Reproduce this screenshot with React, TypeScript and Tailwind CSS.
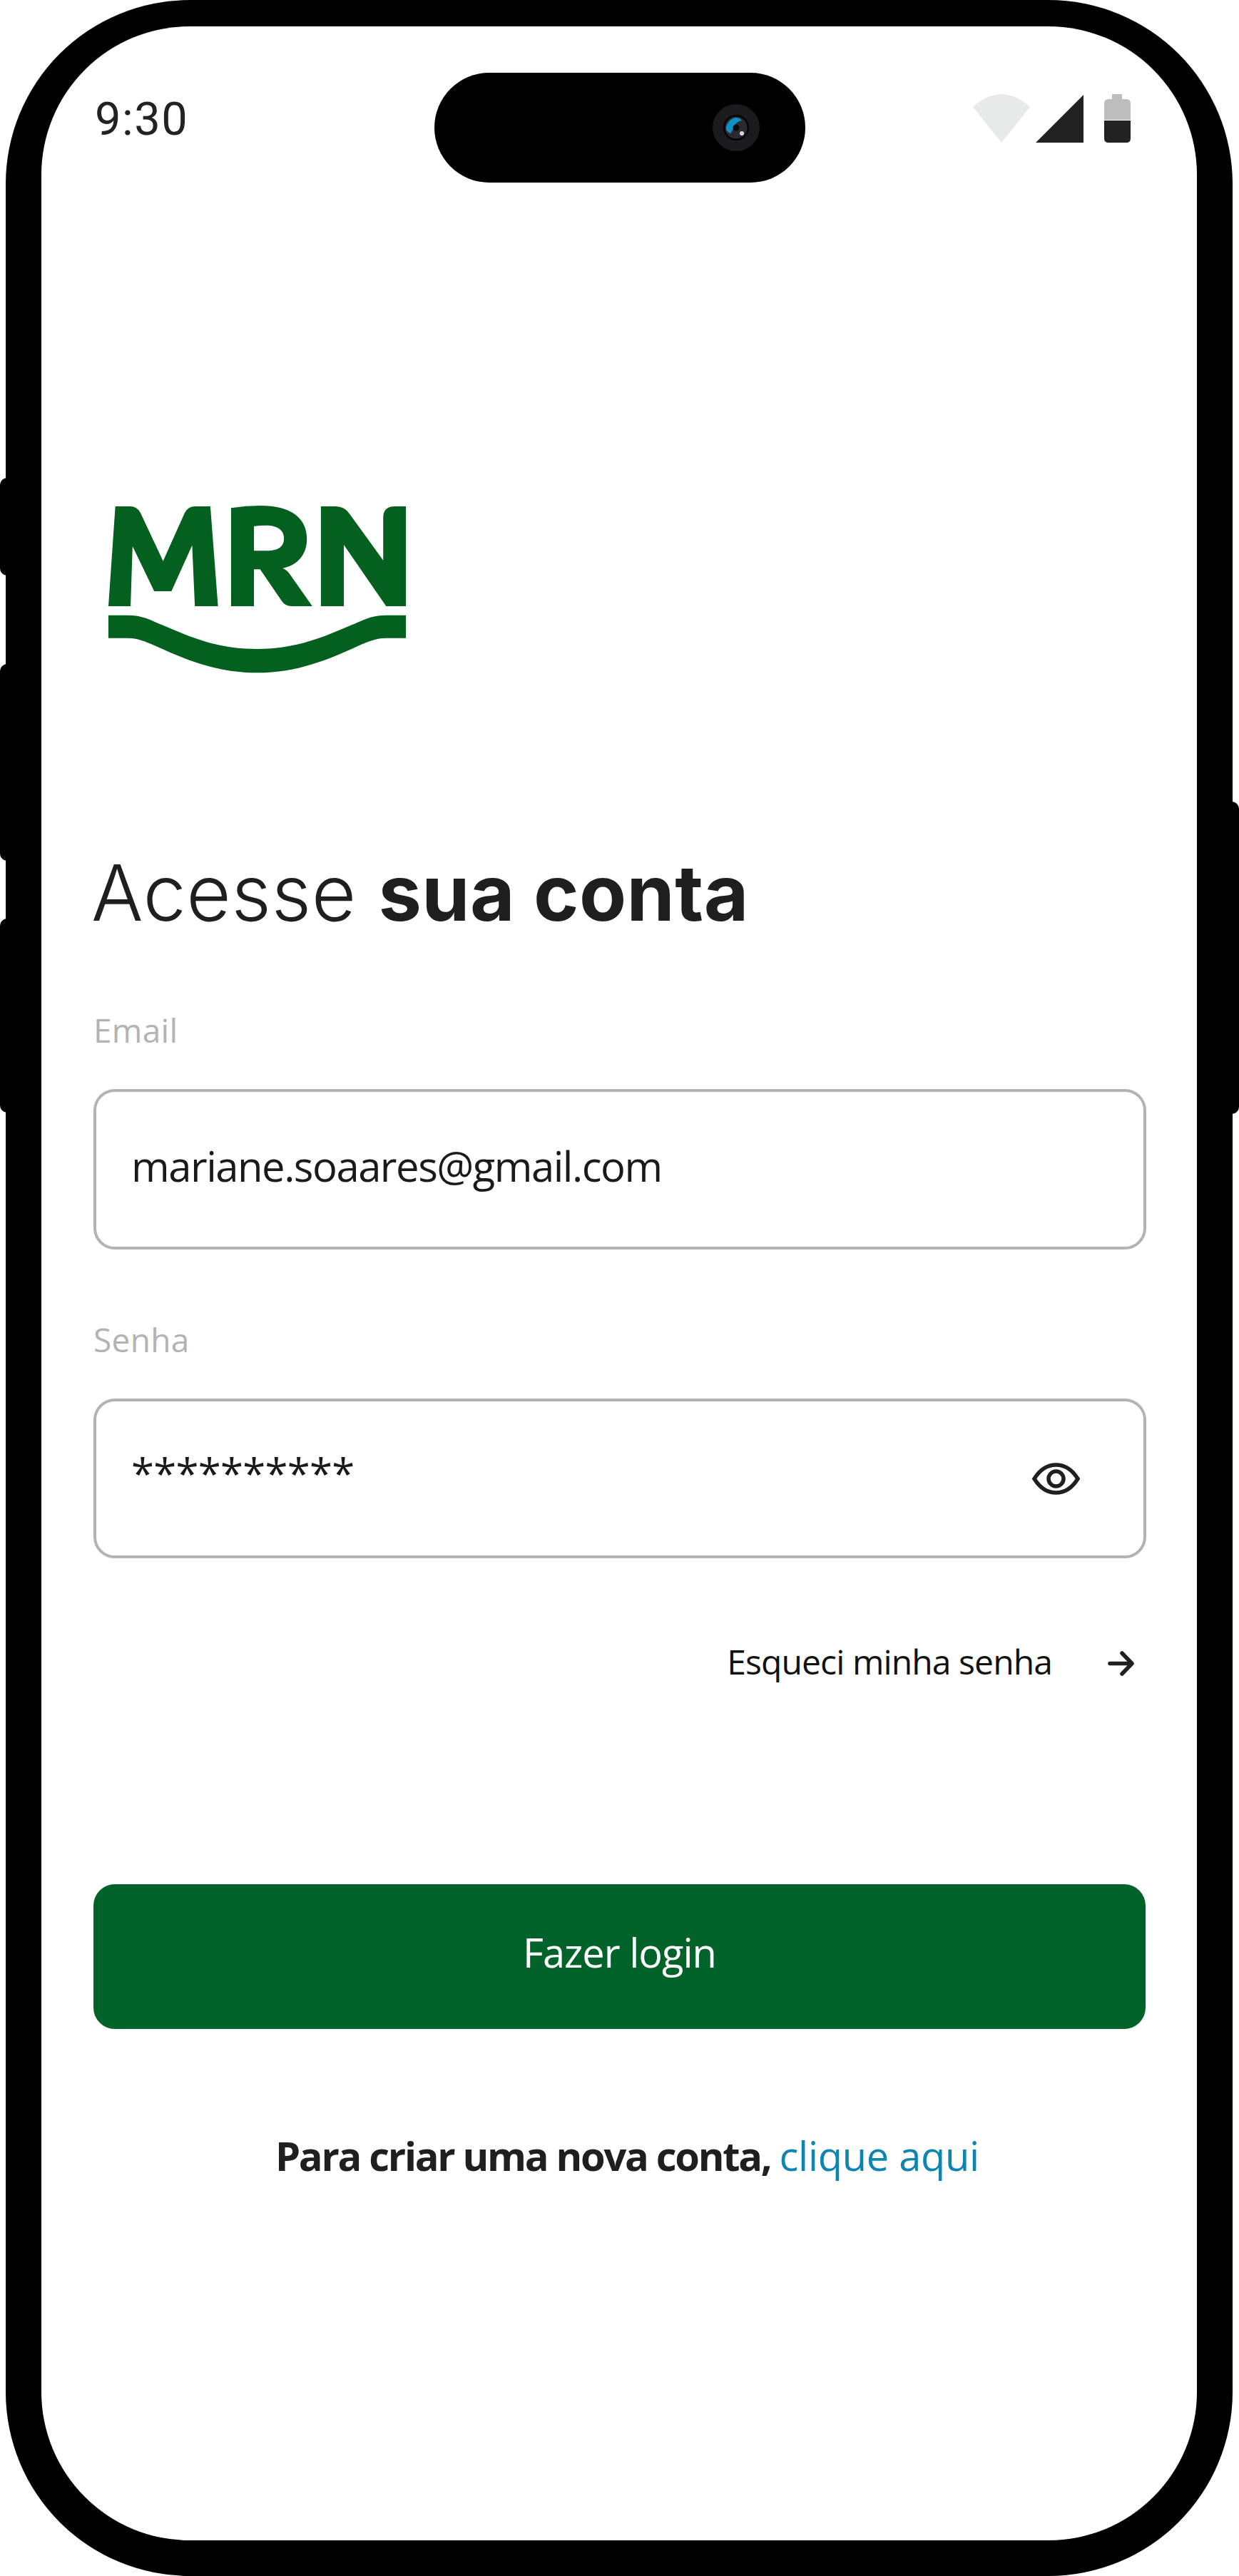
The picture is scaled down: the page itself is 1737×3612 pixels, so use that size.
function Camera() {
  return (
    <svg width="66" height="66" viewBox="0 0 66 66">
      <circle cx="33" cy="33" r="33" fill="#1b1b1d" />
      <circle cx="33" cy="33" r="18" fill="#050505" />
      <circle cx="33" cy="33" r="15.5" fill="#2b2b2f" />
      <path d="M18.7 34C20 26 26 19 33 19Q38 19 41 23Q35 24 32 28L29 35L25 41Q19 38 18.7 34Z" fill="#0f8fc2" />
      <circle cx="33" cy="33" r="4.5" fill="#0a0a0a" />
      <circle cx="41" cy="41" r="3" fill="#d8d8d8" />
    </svg>
  )
}

function StatusIcons() {
  return (
    <div className="flex items-center">
      <svg width="80" height="68" viewBox="0 0 80 68">
        <path d="M40 68L0 18Q40 -18 80 18Z" fill="#e8eaea" />
      </svg>
      <svg className="ml-2" width="67" height="68" viewBox="0 0 67 68">
        <path d="M67 1V68H0Z" fill="#222222" />
      </svg>
      <svg className="ml-[29px]" width="37" height="68" viewBox="0 0 37 68">
        <path d="M11 0H25V7H31Q37 7 37 13V36H0V13Q0 7 6 7H11Z" fill="#bdbdbd" />
        <path d="M0 37H37V62Q37 68 31 68H6Q0 68 0 62Z" fill="#222222" />
      </svg>
    </div>
  )
}

function Logo() {
  return (
    <svg
      className="ml-[21px] block"
      width="417"
      height="235"
      viewBox="152 145 1208 705"
      preserveAspectRatio="none"
      fill="#03601f"
    >
      <path d="M180 148L240 148Q268 148 282 175L374 378L462 175Q475 148 505 148L566 148L597 568L503 568L492 312L408 505L338 505L250 316L242 568L152 568Z" />
      <path
        fillRule="evenodd"
        d="M650 155Q710 145 770 145C890 145 958 195 958 285C958 355 915 398 860 408Q880 418 890 435L980 568L895 568Q870 568 855 545L768 413L743 413L743 568L650 568ZM743 232L743 335L790 335C840 335 865 320 865 282C865 245 835 228 790 228Q765 228 743 232Z"
      />
      <path d="M1015 148L1075 148Q1110 148 1130 178L1268 375L1268 195Q1268 148 1315 148L1360 148L1360 568L1280 568L1108 310L1108 568L1015 568Z" />
      <path d="M152 606L230 606C290 606 320 625 370 647C480 695 590 748 755 748C920 748 1030 695 1140 647C1190 625 1220 606 1280 606L1360 606L1360 702L1280 702C1240 702 1210 715 1160 738C1050 790 920 848 755 848C590 848 460 790 350 738C300 715 270 702 230 702L152 702Z" />
    </svg>
  )
}

function Eye() {
  return (
    <svg width="67" height="45" viewBox="0 0 67 45" fill="none" stroke="#1f1f1f" strokeWidth="5.5">
      <path d="M3 22.5C12 8 22 3 33.5 3C45 3 55 8 64 22.5C55 37 45 42 33.5 42C22 42 12 37 3 22.5Z" />
      <circle cx="33.5" cy="22.5" r="10.5" />
    </svg>
  )
}

export default function App() {
  return (
    <div className="relative h-[3612px] w-[1737px] overflow-hidden bg-white font-['Open_Sans',sans-serif]">
      {/* side buttons */}
      <div className="absolute left-0 top-[670px] h-[137px] w-3 rounded-l-[10px] bg-black" />
      <div className="absolute left-0 top-[931px] h-[276px] w-3 rounded-l-[10px] bg-black" />
      <div className="absolute left-0 top-[1288px] h-[272px] w-3 rounded-l-[10px] bg-black" />
      <div className="absolute right-0 top-[1124px] h-[438px] w-3 rounded-r-[10px] bg-black" />

      <div className="relative ml-2 h-full w-[1720px] rounded-[258px] bg-black px-[50px] pb-[50px] pt-[37px]">
        <div className="relative h-full rounded-[208px] bg-white">
          {/* dynamic island */}
          <div className="absolute left-[551px] top-[65px] flex h-[154px] w-[520px] items-center justify-end rounded-full bg-black pr-[64px]">
            <Camera />
          </div>

          {/* status bar */}
          <div className="flex h-[163px] items-end justify-between pl-[75px] pr-[93px]">
            <span className="mb-[-1px] font-['Roboto',sans-serif] text-[65px] leading-[68px] tracking-[1.5px] text-[#222222]">9:30</span>
            <StatusIcons />
          </div>

          <div className="pl-[73px] pr-[71px] pt-[509px]">
            <Logo />

            <h1 className="ml-[-3px] mt-[254px] font-['Inter',sans-serif] text-[108px] font-light leading-[108px] tracking-[0.4px] text-[#1f1f1f]">
              Acesse <span className="font-bold">sua conta</span>
            </h1>

            <div className="mt-[115px] text-[46px] leading-[46px] tracking-[0.3px] text-[#b3b3b3]">Email</div>
            <div className="mt-[60px] flex h-[225px] items-center rounded-[30px] border-4 border-[#b3b3b3] pb-[10px] pl-[49px] text-[58px] leading-[58px] tracking-[-1.5px] text-[#1a1a1a]">
              mariane.soaares@gmail.com
            </div>

            <div className="mt-[103px] text-[46px] leading-[46px] tracking-[0.3px] text-[#b3b3b3]">Senha</div>
            <div className="mt-[60px] flex h-[224px] items-center justify-between rounded-[30px] border-4 border-[#b3b3b3] pl-[49px] pr-[89px] text-[58px] leading-[58px] tracking-[-0.7px] text-[#1a1a1a]">
              <span className="mb-[14px]">**********</span>
              <Eye />
            </div>

            <div className="mt-[121px] flex items-center justify-end pr-[17px] text-[48px] leading-[48px] tracking-[-0.9px] text-[#111111]">
              <span>Esqueci minha senha</span>
              <svg className="ml-[78px] mt-1" width="37" height="35" viewBox="0 0 37 35" fill="none" stroke="#1f1f1f" strokeWidth="5.5" strokeLinecap="round" strokeLinejoin="round">
                <path d="M3 17.5H33M20 3L34 17.5L20 32" />
              </svg>
            </div>

            <button className="mt-[288px] flex h-[203px] w-[1475px] items-center justify-center rounded-[30px] bg-[#01632a] pb-[13px] text-[56px] leading-[56px] tracking-[-1px] text-white">
              Fazer login
            </button>

            <p className="ml-[255px] mt-[149px] text-[56px] font-bold leading-[56px] tracking-[-2.3px] text-[#1f1f1f]">
              Para criar uma nova conta, <a className="font-normal tracking-[-0.3px] text-[#0e84b0]">clique aqui</a>
            </p>
          </div>
        </div>
      </div>
    </div>
  )
}
